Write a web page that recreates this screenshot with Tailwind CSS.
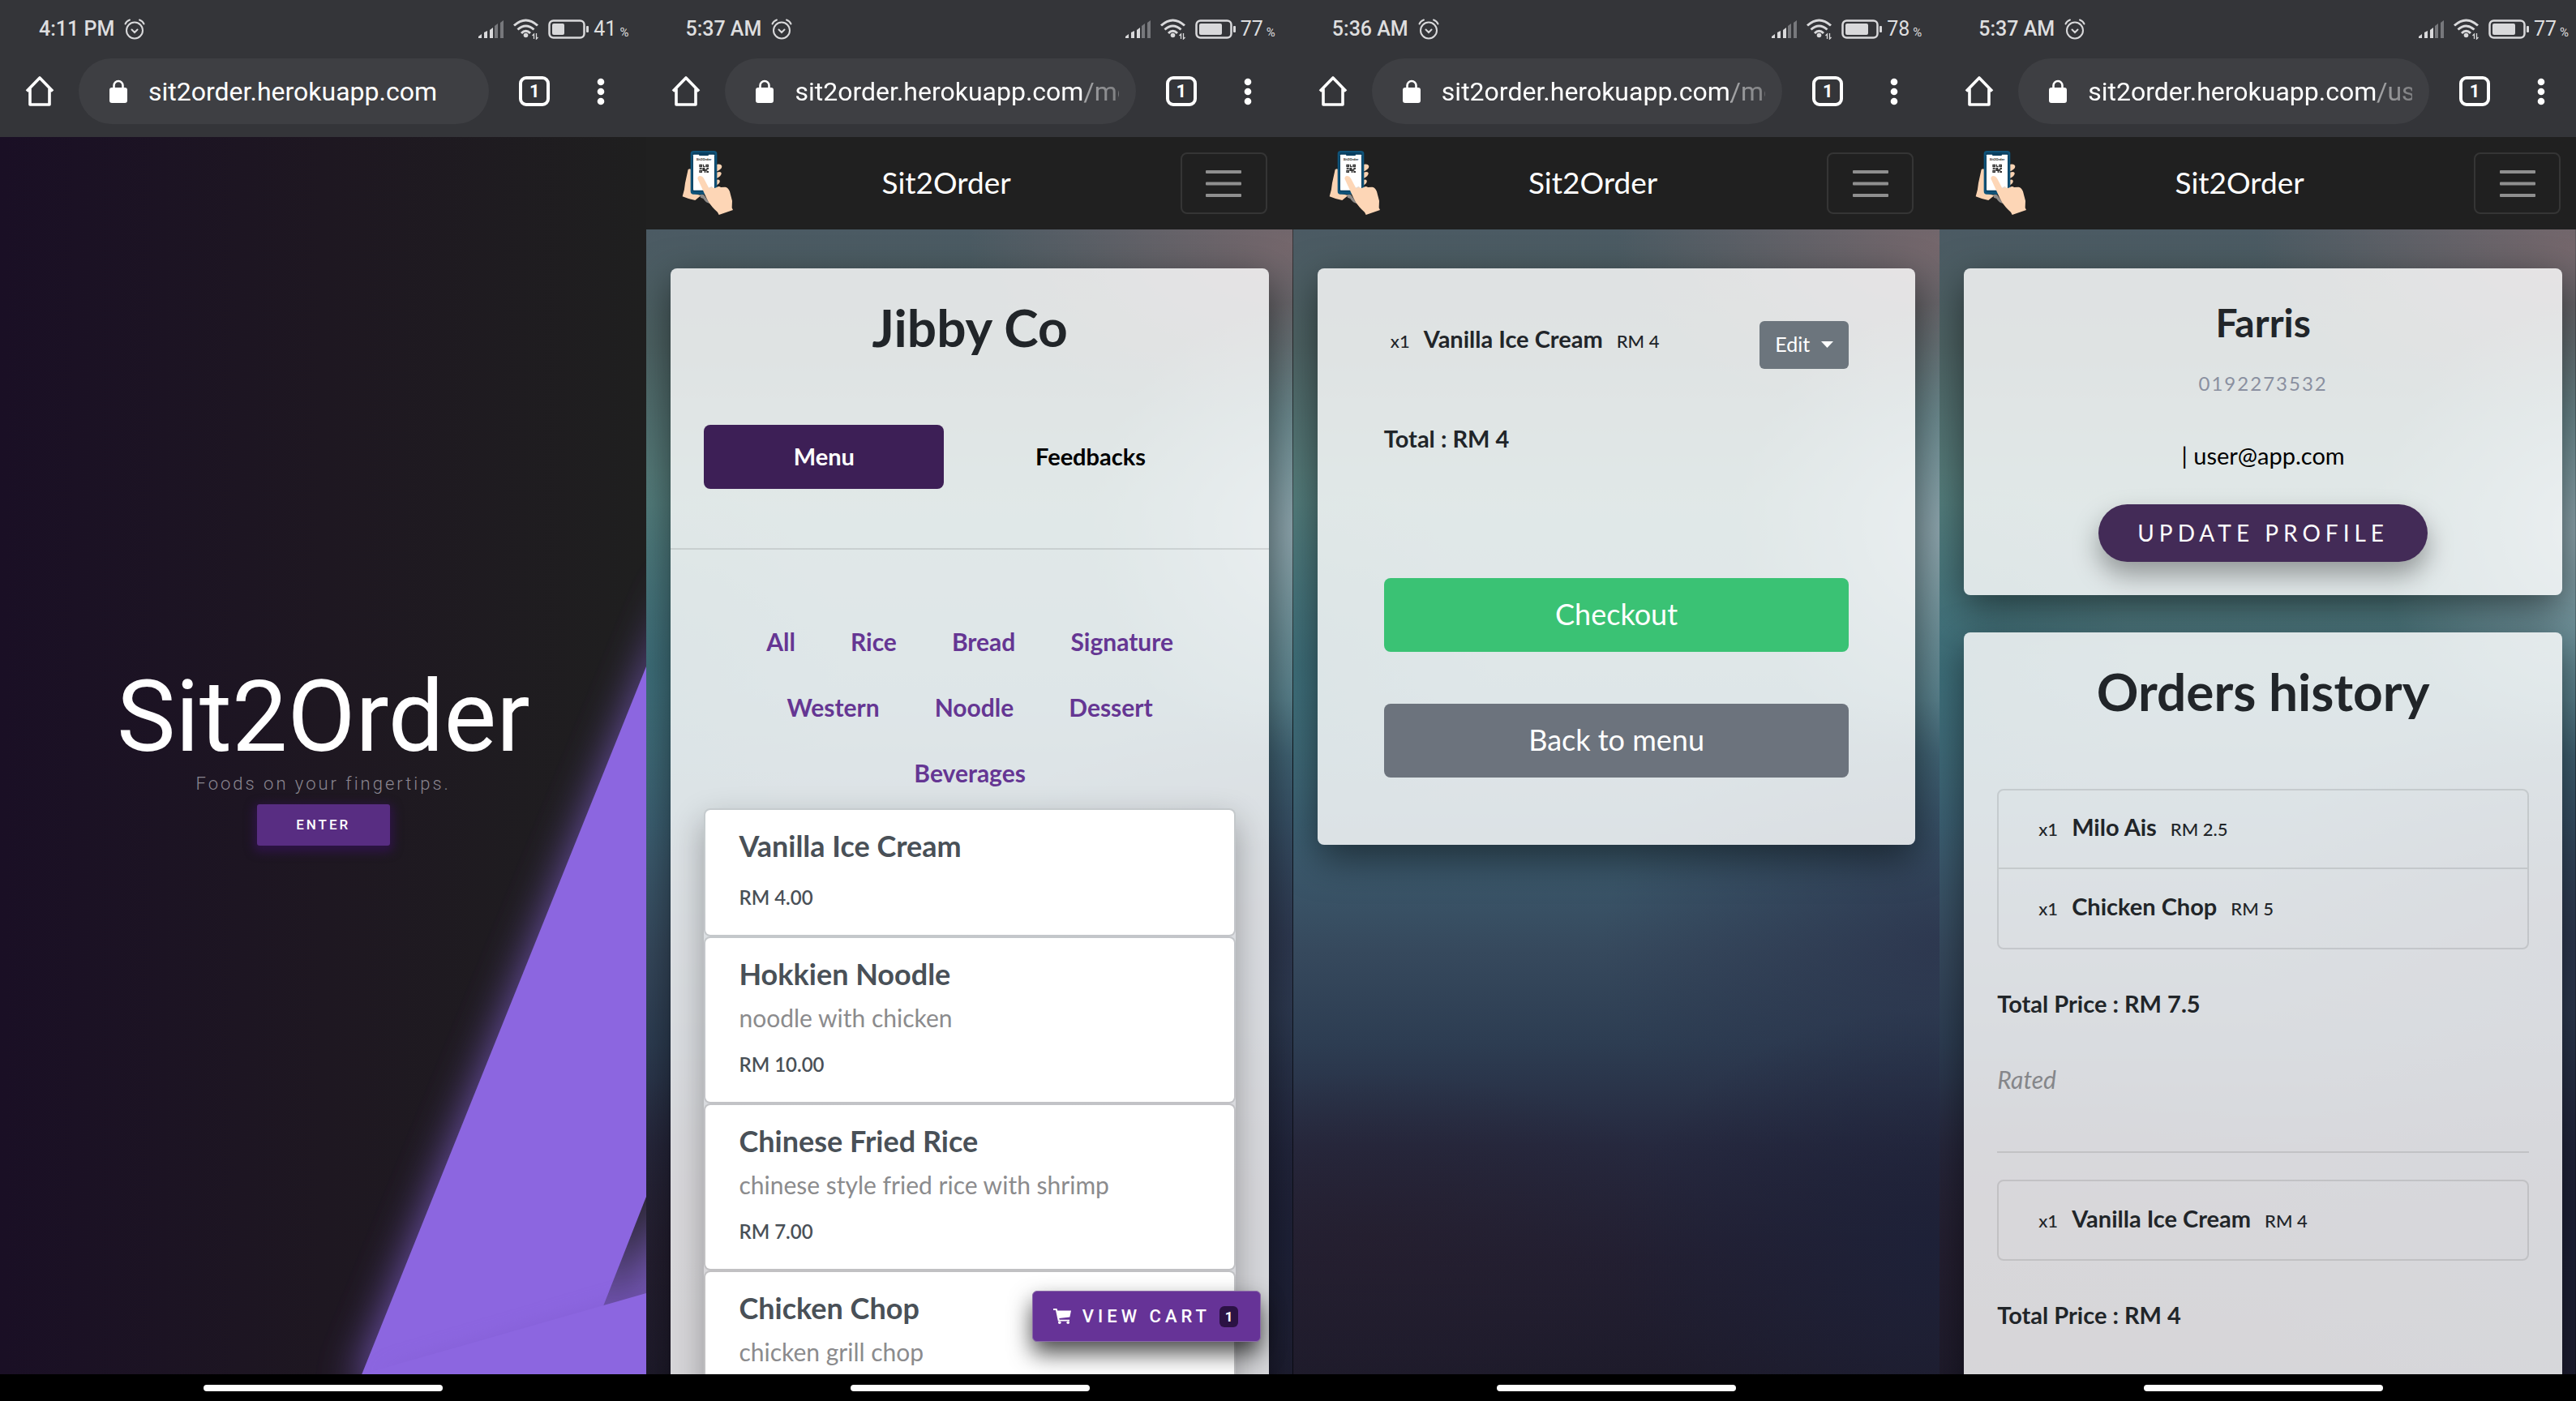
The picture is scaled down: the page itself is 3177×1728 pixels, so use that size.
<!DOCTYPE html>
<html lang="en">
<head>
<meta charset="utf-8">
<meta name="viewport" content="width=device-width, initial-scale=1">
<title>Sit2Order</title>
<script src="https://cdn.jsdelivr.net/npm/@tailwindcss/browser@4"></script>
</head>
<body class="bg-black font-[Lato,'Noto_Sans',sans-serif] text-[#212529]">

<!-- Shared artwork -->
<svg class="absolute size-0" aria-hidden="true">
  <defs>
    <linearGradient id="base" x1="0" y1="0" x2="0" y2="1">
      <stop offset="0" stop-color="#4b5a63"/><stop offset=".1" stop-color="#4d6263"/>
      <stop offset=".24" stop-color="#567f7d"/><stop offset=".4" stop-color="#4a7681"/>
      <stop offset=".52" stop-color="#3d5f72"/><stop offset=".63" stop-color="#36495d"/>
      <stop offset=".71" stop-color="#2d3d52"/><stop offset=".8" stop-color="#26293f"/>
      <stop offset=".9" stop-color="#221f32"/><stop offset="1" stop-color="#1e1b2b"/>
    </linearGradient>
    <radialGradient id="rose"><stop offset="0" stop-color="#75676c"/><stop offset="1" stop-color="#75676c" stop-opacity="0"/></radialGradient>
    <radialGradient id="mist"><stop offset="0" stop-color="#8fa5ad"/><stop offset=".5" stop-color="#84a0aa" stop-opacity=".5"/><stop offset="1" stop-color="#84a0aa" stop-opacity="0"/></radialGradient>
    <radialGradient id="navy"><stop offset="0" stop-color="#293049" stop-opacity=".7"/><stop offset="1" stop-color="#293049" stop-opacity="0"/></radialGradient>
    <radialGradient id="ink"><stop offset="0" stop-color="#1d2138" stop-opacity=".9"/><stop offset="1" stop-color="#1d2138" stop-opacity="0"/></radialGradient>
    <radialGradient id="plum"><stop offset="0" stop-color="#261d2b" stop-opacity=".5"/><stop offset="1" stop-color="#261d2b" stop-opacity="0"/></radialGradient>
    <radialGradient id="teal"><stop offset="0" stop-color="#2f6470" stop-opacity=".5"/><stop offset="1" stop-color="#2f6470" stop-opacity="0"/></radialGradient>
  </defs>
  <symbol id="alarm" viewBox="0 0 26 26">
    <g fill="none" stroke="#d9d9db" stroke-width="2" stroke-linecap="round">
      <circle cx="13" cy="14.500" r="10"/>
      <path d="M9.500 13.500l3.500 3.500 3.500-3.500M1.500 6.500Q3 3 7 1.500M24.500 6.500Q23 3 19 1.500"/>
    </g>
  </symbol>
  <symbol id="signal" viewBox="0 0 31 22">
    <g fill="#d9d9db"><path d="M0 22v-2l4-3v5z"/><path d="M7 22V15l4-2v9zM14 22v-10l4-3v13z"/></g>
    <g fill="#77787c"><path d="M20 22V7l4-3v18zM27 22V3l4-3v22z"/></g>
  </symbol>
  <symbol id="wifi" viewBox="0 0 31 26">
    <g fill="none" stroke="#d9d9db" stroke-width="3">
      <path d="M1 8.500Q15.500-4.500 30 8.500M5.500 13.500Q15.500 4.500 25.500 13.500M10 18Q15.500 12.500 21 18"/>
    </g>
    <circle cx="15.500" cy="20.500" r="2.800" fill="#d9d9db"/>
    <path d="M25.500 25v-6l-2 2M28.500 18v7l2-2" fill="none" stroke="#d9d9db" stroke-width="1.300"/>
  </symbol>
  <symbol id="home" viewBox="0 0 36 37">
    <path d="M2 18.500L18 2l16 16.500M6 15.500V35h24V15.500" fill="none" stroke="#fff" stroke-width="3.600" stroke-linejoin="round"/>
  </symbol>
  <symbol id="lock" viewBox="0 0 22 29">
    <rect y="10" width="22" height="19" rx="3" fill="#fff"/>
    <path d="M5.500 11V7.500a5.500 5.500 0 0 1 11 0V11" fill="none" stroke="#fff" stroke-width="2.600"/>
  </symbol>
  <symbol id="dots" viewBox="0 0 10 34">
    <g fill="#fff"><circle cx="5" cy="5" r="4.300"/><circle cx="5" cy="17" r="4.300"/><circle cx="5" cy="29" r="4.300"/></g>
  </symbol>
  <symbol id="bars" viewBox="0 0 44 33">
    <g fill="#8f8f8f"><rect width="44" height="4" rx="1"/><rect y="14.500" width="44" height="4" rx="1"/><rect y="29" width="44" height="4" rx="1"/></g>
  </symbol>
  <symbol id="logo" viewBox="65 40 192 246">
    <path d="M88 112q12-6 14 6v62l10 22 24 6-22 18q-24-4-47-14 8-24 10-50z" fill="#fbd3b2"/>
    <g fill="#fbd3b2">
      <path d="M186 96q22-8 27 3 2 13-27 23zM186 126q20-9 25-1 3 13-25 23zM174 160q25-16 31-7 3 11-18 21z"/>
    </g>
    <path d="M132 206q10-4 16 2l20 30q-14-2-24-18l-10-4z" fill="#8d8a88"/>
    <rect x="97" y="43" width="98" height="161" rx="11" fill="#0f5379"/>
    <rect x="104" y="50" width="84" height="144" rx="5" fill="#0a3f60"/>
    <rect x="107" y="57" width="78" height="132" rx="2" fill="#fff"/>
    <path d="M128 50h36v8q0 3-3 3h-30q-3 0-3-3z" fill="#0a3f60"/>
    <text x="146" y="80" text-anchor="middle" font-family="Roboto, sans-serif" font-size="13" font-weight="700" fill="#333">Sit2Order</text>
    <path d="M129 93h11v10h-11zM153 93h11v10h-11zM129 114h11v10h-11zM142 93h4v6h5v5h-8zM130 105h9v6h-9zM141 106h9v5h6v-6h8v6h-5v6h-6v7h-5v-6h-7zM156 118h8v6h-8z" fill="#333"/>
    <path d="M133 97h3v2h-3zM157 97h3v2h-3zM133 118h3v2h-3z" fill="#ccc"/>
    <path d="M150 186l26-12 10 24-16 10z" fill="#e7d9cf"/>
    <path d="M124 148q-3-9 6-12 10-2 16 9l20 38q10-8 20-2l8-3q8-6 15 0l16-1q12 2 17 17l9 34-1 26 4 8-52 18-5-10q-30-26-40-50z" fill="#fdd6b6"/>
  </symbol>
  <symbol id="cart" viewBox="0 0 22 19">
    <path d="M0 0h4.500l.8 2.400H22l-1.600 8.200-13.200 1.500.5 1.600H20V15.600H5.900L3 2H0z" fill="#fff"/>
    <circle cx="7.800" cy="17.200" r="1.800" fill="#fff"/><circle cx="18.200" cy="17.200" r="1.800" fill="#fff"/>
  </symbol>
  <symbol id="scene" viewBox="0 0 797 1412" preserveAspectRatio="none">
    <rect width="797" height="1412" fill="url(#base)"/>
    <ellipse cx="797" cy="20" rx="400" ry="210" fill="url(#rose)"/>
    <ellipse cx="810" cy="370" rx="260" ry="280" fill="url(#mist)"/>
    <ellipse cx="0" cy="540" rx="240" ry="240" fill="url(#teal)"/>
    <ellipse cx="800" cy="880" rx="420" ry="300" fill="url(#navy)"/>
    <ellipse cx="100" cy="1240" rx="420" ry="200" fill="url(#plum)"/>
    <ellipse cx="800" cy="1260" rx="400" ry="300" fill="url(#ink)"/>
  </symbol>
</svg>

<main class="flex h-screen w-full overflow-hidden">

  <!-- Landing -->
  <section class="flex w-[25.1%] shrink-0 flex-col">
    <header class="bg-[#343539] pb-4 font-[Roboto,sans-serif]">
      <div class="flex h-[72px] items-center pl-12 pr-[22px] text-[#dededf]">
        <span class="text-[25px] leading-8 font-medium whitespace-nowrap">4:11 PM</span>
        <svg class="ml-3 size-[26px]"><use href="#alarm"/></svg>
        <svg class="ml-auto h-[22px] w-[31px]"><use href="#signal"/></svg>
        <svg class="ml-3 h-[26px] w-[31px]"><use href="#wifi"/></svg>
        <svg class="ml-3 h-6 w-[50px]" viewBox="0 0 50 24"><rect x="1.500" y="1.500" width="43" height="21" rx="5" fill="none" stroke="#d9d9db" stroke-width="2.500"/><rect x="5" y="5" width="15" height="14" rx="2" fill="#d9d9db"/><rect x="47" y="8" width="3" height="8" rx="1" fill="#d9d9db"/></svg>
        <span class="ml-[6px] text-[25px]">41</span><span class="ml-1 pt-2 text-[15px]">%</span>
      </div>
      <div class="flex items-center pl-[31px] pr-[51px]">
        <a href="#" aria-label="Home" class="block h-[37px] w-9"><svg class="size-full"><use href="#home"/></svg></a>
        <label class="ml-[30px] flex h-[81px] min-w-0 flex-1 items-center rounded-full bg-[#3e3f43] pl-[38px] pr-[21px]">
          <svg class="h-[29px] w-[22px] shrink-0"><use href="#lock"/></svg>
          <input aria-label="Address" value="sit2order.herokuapp.com" class="ml-[26px] h-11 min-w-0 flex-1 bg-transparent text-[32px] text-white outline-none">
        </label>
        <button class="ml-[37px] h-[37px] w-[38px] rounded-[9px] border-4 border-white text-[22px] leading-[29px] font-bold text-white">1</button>
        <button aria-label="More" class="ml-[58px] h-[34px] w-[10px]"><svg class="size-full"><use href="#dots"/></svg></button>
      </div>
    </header>
    <div class="relative flex min-h-0 flex-1 flex-col items-center justify-center overflow-hidden bg-linear-to-r from-[#1a0f25] via-[#1e1721] to-[#1f1f1f] font-[Roboto,sans-serif]">
      <svg class="absolute inset-0 size-full" viewBox="0 0 797 1526" preserveAspectRatio="none" aria-hidden="true">
        <defs>
          <filter id="glow" x="-50%" y="-20%" width="200%" height="140%"><feGaussianBlur stdDeviation="26"/></filter>
          <filter id="soft" x="-20%" y="-60%" width="140%" height="220%"><feGaussianBlur stdDeviation="14"/></filter>
        </defs>
        <path d="M850 528L436 1546H900V1200L744 1441z" fill="#8c66e0" opacity=".75" filter="url(#glow)"/>
        <path d="M797 652L446 1526H640L744 1441L797 1306z" fill="#8c66e0"/>
        <path d="M459 1526L797 1426V1526z" fill="#6a4ab4" opacity=".25" filter="url(#soft)"/>
        <path d="M446 1526L744 1441L797 1426V1526z" fill="#8c66e0"/>
      </svg>
      <h1 class="relative text-[122px] leading-[128px] text-white">Sit2Order</h1>
      <p class="relative mt-[2px] text-[22px] leading-8 font-light tracking-[3px] text-[#8a8690]">Foods on your fingertips.</p>
      <button class="relative mt-[9px] h-[51px] w-[164px] rounded-[3px] bg-[#582d82] text-[17px] font-medium tracking-[3px] text-white shadow-[0_4px_12px_4px_#2e1446]">ENTER</button>
    </div>
    <footer class="flex h-[33px] shrink-0 items-center justify-center bg-black"><span class="h-2 w-[295px] rounded-full bg-white"></span></footer>
  </section>

  <!-- Restaurant menu -->
  <section class="flex w-[25.1%] shrink-0 flex-col">
    <header class="bg-[#343539] pb-4 font-[Roboto,sans-serif]">
      <div class="flex h-[72px] items-center pl-12 pr-[22px] text-[#dededf]">
        <span class="text-[25px] leading-8 font-medium whitespace-nowrap">5:37 AM</span>
        <svg class="ml-3 size-[26px]"><use href="#alarm"/></svg>
        <svg class="ml-auto h-[22px] w-[31px]"><use href="#signal"/></svg>
        <svg class="ml-3 h-[26px] w-[31px]"><use href="#wifi"/></svg>
        <svg class="ml-3 h-6 w-[50px]" viewBox="0 0 50 24"><rect x="1.500" y="1.500" width="43" height="21" rx="5" fill="none" stroke="#d9d9db" stroke-width="2.500"/><rect x="5" y="5" width="28" height="14" rx="2" fill="#d9d9db"/><rect x="47" y="8" width="3" height="8" rx="1" fill="#d9d9db"/></svg>
        <span class="ml-[6px] text-[25px]">77</span><span class="ml-1 pt-2 text-[15px]">%</span>
      </div>
      <div class="flex items-center pl-[31px] pr-[51px]">
        <a href="#" aria-label="Home" class="block h-[37px] w-9"><svg class="size-full"><use href="#home"/></svg></a>
        <label class="ml-[30px] flex h-[81px] min-w-0 flex-1 items-center rounded-full bg-[#3e3f43] pl-[38px] pr-[21px]">
          <svg class="h-[29px] w-[22px] shrink-0"><use href="#lock"/></svg>
          <input aria-label="Address" value="sit2order.herokuapp.com/menu" class="ml-[26px] h-11 min-w-0 flex-1 bg-transparent text-[32px] text-white outline-none mask-[linear-gradient(90deg,#000_357px,#0008_357px,#0005)]">
        </label>
        <button class="ml-[37px] h-[37px] w-[38px] rounded-[9px] border-4 border-white text-[22px] leading-[29px] font-bold text-white">1</button>
        <button aria-label="More" class="ml-[58px] h-[34px] w-[10px]"><svg class="size-full"><use href="#dots"/></svg></button>
      </div>
    </header>
    <nav class="flex h-[114px] shrink-0 items-center bg-[#202020] pl-11 pr-8">
      <a href="#" aria-label="Sit2Order home"><svg class="h-[82px] w-16"><use href="#logo"/></svg></a>
      <a href="#" class="flex-1 pb-[2px] pr-[27px] text-center text-[37px] leading-[44px] text-white">Sit2Order</a>
      <button aria-label="Toggle navigation" class="flex h-[76px] w-[107px] items-center justify-center rounded-[8px] border-2 border-[#353535]"><svg class="h-[33px] w-11"><use href="#bars"/></svg></button>
    </nav>
    <div class="relative min-h-0 flex-1 overflow-hidden">
      <svg class="absolute inset-0 size-full" aria-hidden="true"><use href="#scene"/></svg>
      <article class="relative mx-[30px] mt-12 rounded-[8px] bg-white/82 pt-[33px] pb-10 shadow-[0_16px_48px_rgba(0,0,0,0.5)]">
        <h1 class="text-center text-[64px] leading-[80px] font-bold">Jibby Co</h1>
        <div class="mt-20 flex gap-[33px] pl-[41px] pr-[72px] text-[29px] font-bold">
          <button class="h-[79px] flex-1 rounded-[8px] bg-[#3d1f56] pb-[2px] text-white">Menu</button>
          <button class="h-[79px] flex-1 pb-[2px] text-black">Feedbacks</button>
        </div>
        <hr class="mt-[73px] border-t-2 border-black/10">
        <div class="mx-10 mt-[73px] flex flex-wrap justify-center px-8 text-[30px] leading-[81px] font-bold text-[#653693]">
          <a href="#" class="px-[34px]">All</a>
          <a href="#" class="px-[34px]">Rice</a>
          <a href="#" class="px-[34px]">Bread</a>
          <a href="#" class="px-[34px]">Signature</a>
          <a href="#" class="px-[34px]">Western</a>
          <a href="#" class="px-[34px]">Noodle</a>
          <a href="#" class="px-[34px]">Dessert</a>
          <a href="#" class="px-[34px]">Beverages</a>
        </div>
        <ul class="mx-[41px] mt-[3px] rounded-[8px] text-[#495057] shadow-[0_16px_40px_rgba(0,0,0,0.3)]">
          <li class="rounded-[8px] border-2 border-black/10 bg-white bg-clip-padding px-[41px] pt-[22px] pb-7">
            <h2 class="text-[36px] leading-[44px] font-bold">Vanilla Ice Cream</h2>
            <p class="mt-6 text-2xl leading-9 font-semibold">RM 4.00</p>
          </li>
          <li class="rounded-[8px] border-2 border-black/10 bg-white bg-clip-padding px-[41px] pt-[22px] pb-7">
            <h2 class="text-[36px] leading-[44px] font-bold">Hokkien Noodle</h2>
            <p class="mt-[10px] text-[30px] leading-[44px] text-[#8b8b8d]">noodle with chicken</p>
            <p class="mt-[18px] text-2xl leading-9 font-semibold">RM 10.00</p>
          </li>
          <li class="rounded-[8px] border-2 border-black/10 bg-white bg-clip-padding px-[41px] pt-[22px] pb-7">
            <h2 class="text-[36px] leading-[44px] font-bold">Chinese Fried Rice</h2>
            <p class="mt-[10px] text-[30px] leading-[44px] text-[#8b8b8d]">chinese style fried rice with shrimp</p>
            <p class="mt-[18px] text-2xl leading-9 font-semibold">RM 7.00</p>
          </li>
          <li class="rounded-[8px] border-2 border-black/10 bg-white bg-clip-padding px-[41px] pt-[22px] pb-[72px]">
            <h2 class="text-[36px] leading-[44px] font-bold">Chicken Chop</h2>
            <p class="mt-[10px] text-[30px] leading-[44px] text-[#8b8b8d]">chicken grill chop</p>
          </li>
        </ul>
      </article>
      <button class="absolute right-10 bottom-10 flex h-[63px] w-[282px] items-center rounded-[6px] border border-[#8a6aa8] bg-[#663397] pl-[25px] font-[Roboto,sans-serif] text-white shadow-[0_14px_28px_rgba(0,0,0,0.7)]">
        <svg class="h-[19px] w-[22px]"><use href="#cart"/></svg>
        <span class="ml-[14px] text-[22px] font-medium tracking-[5px]">VIEW CART</span>
        <span class="ml-[11px] h-[26px] w-[23px] rounded-[6px] bg-[#2b1244] text-center text-[17px] leading-[26px] font-bold">1</span>
      </button>
    </div>
    <footer class="flex h-[33px] shrink-0 items-center justify-center bg-black"><span class="h-2 w-[295px] rounded-full bg-white"></span></footer>
  </section>

  <!-- Cart -->
  <section class="flex w-[25.1%] shrink-0 flex-col">
    <header class="bg-[#343539] pb-4 font-[Roboto,sans-serif]">
      <div class="flex h-[72px] items-center pl-12 pr-[22px] text-[#dededf]">
        <span class="text-[25px] leading-8 font-medium whitespace-nowrap">5:36 AM</span>
        <svg class="ml-3 size-[26px]"><use href="#alarm"/></svg>
        <svg class="ml-auto h-[22px] w-[31px]"><use href="#signal"/></svg>
        <svg class="ml-3 h-[26px] w-[31px]"><use href="#wifi"/></svg>
        <svg class="ml-3 h-6 w-[50px]" viewBox="0 0 50 24"><rect x="1.500" y="1.500" width="43" height="21" rx="5" fill="none" stroke="#d9d9db" stroke-width="2.500"/><rect x="5" y="5" width="28" height="14" rx="2" fill="#d9d9db"/><rect x="47" y="8" width="3" height="8" rx="1" fill="#d9d9db"/></svg>
        <span class="ml-[6px] text-[25px]">78</span><span class="ml-1 pt-2 text-[15px]">%</span>
      </div>
      <div class="flex items-center pl-[31px] pr-[51px]">
        <a href="#" aria-label="Home" class="block h-[37px] w-9"><svg class="size-full"><use href="#home"/></svg></a>
        <label class="ml-[30px] flex h-[81px] min-w-0 flex-1 items-center rounded-full bg-[#3e3f43] pl-[38px] pr-[21px]">
          <svg class="h-[29px] w-[22px] shrink-0"><use href="#lock"/></svg>
          <input aria-label="Address" value="sit2order.herokuapp.com/menu" class="ml-[26px] h-11 min-w-0 flex-1 bg-transparent text-[32px] text-white outline-none mask-[linear-gradient(90deg,#000_357px,#0008_357px,#0005)]">
        </label>
        <button class="ml-[37px] h-[37px] w-[38px] rounded-[9px] border-4 border-white text-[22px] leading-[29px] font-bold text-white">1</button>
        <button aria-label="More" class="ml-[58px] h-[34px] w-[10px]"><svg class="size-full"><use href="#dots"/></svg></button>
      </div>
    </header>
    <nav class="flex h-[114px] shrink-0 items-center bg-[#202020] pl-11 pr-8">
      <a href="#" aria-label="Sit2Order home"><svg class="h-[82px] w-16"><use href="#logo"/></svg></a>
      <a href="#" class="flex-1 pb-[2px] pr-[27px] text-center text-[37px] leading-[44px] text-white">Sit2Order</a>
      <button aria-label="Toggle navigation" class="flex h-[76px] w-[107px] items-center justify-center rounded-[8px] border-2 border-[#353535]"><svg class="h-[33px] w-11"><use href="#bars"/></svg></button>
    </nav>
    <div class="relative min-h-0 flex-1 overflow-hidden">
      <svg class="absolute inset-0 size-full" aria-hidden="true"><use href="#scene"/></svg>
      <article class="relative mx-[30px] mt-12 rounded-[8px] bg-white/82 px-[82px] pt-[65px] pb-[83px] shadow-[0_16px_48px_rgba(0,0,0,0.5)]">
        <div class="flex items-start justify-between pl-2">
          <p class="flex items-baseline gap-[17px] text-[22px] leading-[44px] font-medium"><span>x1</span><strong class="text-[29px] font-bold">Vanilla Ice Cream</strong><span>RM 4</span></p>
          <button aria-haspopup="menu" class="flex h-[59px] w-[110px] items-center justify-center gap-[14px] rounded-[6px] bg-[#6c757d] pb-[2px] text-[25px] text-white">Edit<svg class="h-2 w-[15px]" viewBox="0 0 15 8"><path d="M0 0h15L7.500 8z" fill="#fff"/></svg></button>
        </div>
        <p class="mt-16 text-[29px] leading-[44px] font-bold">Total : RM 4</p>
        <button class="mt-[150px] block h-[91px] w-full rounded-[8px] bg-[#3ac274] pb-1 text-[36px] text-white">Checkout</button>
        <button class="mt-16 block h-[91px] w-full rounded-[8px] bg-[#6c737d] pb-1 text-[36px] text-white">Back to menu</button>
      </article>
    </div>
    <footer class="flex h-[33px] shrink-0 items-center justify-center bg-black"><span class="h-2 w-[295px] rounded-full bg-white"></span></footer>
  </section>

  <!-- Profile -->
  <section class="flex min-w-0 flex-1 flex-col">
    <header class="bg-[#343539] pb-4 font-[Roboto,sans-serif]">
      <div class="flex h-[72px] items-center pl-12 pr-[9px] text-[#dededf]">
        <span class="text-[25px] leading-8 font-medium whitespace-nowrap">5:37 AM</span>
        <svg class="ml-3 size-[26px]"><use href="#alarm"/></svg>
        <svg class="ml-auto h-[22px] w-[31px]"><use href="#signal"/></svg>
        <svg class="ml-3 h-[26px] w-[31px]"><use href="#wifi"/></svg>
        <svg class="ml-3 h-6 w-[50px]" viewBox="0 0 50 24"><rect x="1.500" y="1.500" width="43" height="21" rx="5" fill="none" stroke="#d9d9db" stroke-width="2.500"/><rect x="5" y="5" width="28" height="14" rx="2" fill="#d9d9db"/><rect x="47" y="8" width="3" height="8" rx="1" fill="#d9d9db"/></svg>
        <span class="ml-[6px] text-[25px]">77</span><span class="ml-1 pt-2 text-[15px]">%</span>
      </div>
      <div class="flex items-center pl-[31px] pr-[38px]">
        <a href="#" aria-label="Home" class="block h-[37px] w-9"><svg class="size-full"><use href="#home"/></svg></a>
        <label class="ml-[30px] flex h-[81px] min-w-0 flex-1 items-center rounded-full bg-[#3e3f43] pl-[38px] pr-[21px]">
          <svg class="h-[29px] w-[22px] shrink-0"><use href="#lock"/></svg>
          <input aria-label="Address" value="sit2order.herokuapp.com/user" class="ml-[26px] h-11 min-w-0 flex-1 bg-transparent text-[32px] text-white outline-none mask-[linear-gradient(90deg,#000_357px,#0008_357px,#0005)]">
        </label>
        <button class="ml-[37px] h-[37px] w-[38px] rounded-[9px] border-4 border-white text-[22px] leading-[29px] font-bold text-white">1</button>
        <button aria-label="More" class="ml-[58px] h-[34px] w-[10px]"><svg class="size-full"><use href="#dots"/></svg></button>
      </div>
    </header>
    <nav class="flex h-[114px] shrink-0 items-center bg-[#202020] pl-11 pr-[19px]">
      <a href="#" aria-label="Sit2Order home"><svg class="h-[82px] w-16"><use href="#logo"/></svg></a>
      <a href="#" class="flex-1 pb-[2px] pr-[27px] text-center text-[37px] leading-[44px] text-white">Sit2Order</a>
      <button aria-label="Toggle navigation" class="flex h-[76px] w-[107px] items-center justify-center rounded-[8px] border-2 border-[#353535]"><svg class="h-[33px] w-11"><use href="#bars"/></svg></button>
    </nav>
    <div class="relative min-h-0 flex-1 overflow-hidden pl-[30px] pr-[17px]">
      <svg class="absolute inset-0 size-full" aria-hidden="true"><use href="#scene"/></svg>
      <article class="relative mt-12 flex flex-col items-center rounded-[8px] bg-white/82 pt-[37px] pb-[41px] shadow-[0_16px_48px_rgba(0,0,0,0.5)]">
        <h2 class="text-[48px] leading-[60px] font-bold">Farris</h2>
        <p class="mt-[27px] text-2xl leading-9 tracking-[2px] text-[#8a90a0]">0192273532</p>
        <p class="mt-[49px] text-[29px] leading-[44px] text-black">| user@app.com</p>
        <button class="mt-[38px] h-[71px] w-[406px] rounded-full bg-[#432b57] pb-[2px] text-[28px] tracking-[6px] text-white shadow-[0_16px_32px_rgba(0,0,0,0.35)]">UPDATE PROFILE</button>
      </article>
      <article class="relative mt-[46px] rounded-[8px] bg-white/82 px-[41px] pt-[33px] pb-32 shadow-[0_16px_48px_rgba(0,0,0,0.5)]">
        <h1 class="text-center text-[64px] leading-[80px] font-bold">Orders history</h1>
        <ul class="mt-20 divide-y-2 divide-black/10 rounded-[8px] border-2 border-black/10 font-medium">
          <li class="flex h-[97px] items-center pb-[2px] pl-[49px]"><p class="flex items-baseline gap-[17px] text-[22px] leading-[44px]"><span>x1</span><strong class="text-[29px] font-bold">Milo Ais</strong><span>RM 2.5</span></p></li>
          <li class="flex h-[97px] items-center pb-[2px] pl-[49px]"><p class="flex items-baseline gap-[17px] text-[22px] leading-[44px]"><span>x1</span><strong class="text-[29px] font-bold">Chicken Chop</strong><span>RM 5</span></p></li>
        </ul>
        <p class="mt-[45px] text-[29px] leading-[44px] font-bold">Total Price : RM 7.5</p>
        <p class="mt-[49px] text-[30px] leading-[44px] text-[#85868a] italic">Rated</p>
        <hr class="mt-[67px] border-t-2 border-black/10">
        <ul class="mt-[33px] rounded-[8px] border-2 border-black/10 font-medium">
          <li class="flex h-24 items-center pb-[2px] pl-[49px]"><p class="flex items-baseline gap-[17px] text-[22px] leading-[44px]"><span>x1</span><strong class="text-[29px] font-bold">Vanilla Ice Cream</strong><span>RM 4</span></p></li>
        </ul>
        <p class="mt-[45px] text-[29px] leading-[44px] font-bold">Total Price : RM 4</p>
      </article>
    </div>
    <footer class="flex h-[33px] shrink-0 items-center justify-center bg-black pl-[13px]"><span class="h-2 w-[295px] rounded-full bg-white"></span></footer>
  </section>
</main>
</body>
</html>
